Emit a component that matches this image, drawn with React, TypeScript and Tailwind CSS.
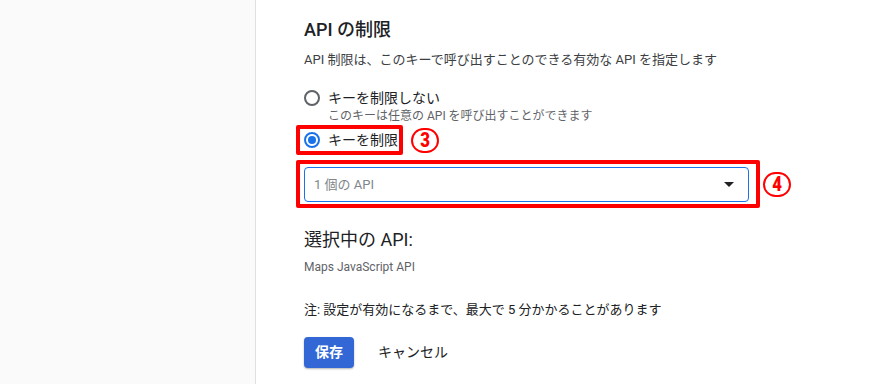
import React from "react";

const FONT = "font-['Roboto','Noto_Sans_CJK_JP',sans-serif]";

const Radio = ({ checked }: { checked?: boolean }) =>
  checked ? (
    <span className="w-4 h-4 rounded-full border-2 border-[#1a73e8] flex items-center justify-center shrink-0">
      <span className="w-2 h-2 rounded-full bg-[#1a73e8]" />
    </span>
  ) : (
    <span className="w-4 h-4 rounded-full border-2 border-[#5f6368] shrink-0" />
  );

const Marker = ({ n }: { n: string }) => (
  <span className="w-[28px] h-[25px] rounded-full border-2 border-[#ff0000] flex items-center justify-center text-[#ff0000] text-[21px] font-black leading-none shrink-0">
    <span className="inline-block scale-x-[0.8]">{n}</span>
  </span>
);

export default function App() {
  return (
    <div className={`flex w-[895px] h-[384px] bg-white overflow-hidden ${FONT}`}>
      {/* Side panel */}
      <aside className="w-[256px] h-full bg-[#fafafa] border-r border-[#e0e0e0] shrink-0" />

      {/* Form */}
      <main className="pl-[48px] pt-[18px] flex flex-col">
        <h2 className="text-[18px] leading-[24px] font-medium text-[#202124]">API の制限</h2>
        <p className="mt-[8px] text-[13px] leading-[20px] text-[#3c4043]">
          API 制限は、このキーで呼び出すことのできる有効な API を指定します
        </p>

        <label className="mt-[18px] flex items-center gap-2 h-[20px]">
          <Radio />
          <span className="text-[14px] text-[#202124]">キーを制限しない</span>
        </label>
        <p className="pl-[24px] text-[12px] leading-[16px] text-[#5f6368]">
          このキーは任意の API を呼び出すことができます
        </p>

        <div className="mt-[1px] flex items-center gap-[8px]">
          <div className="ml-[-8px] h-[30px] border-[4px] border-[#ff0000] rounded-[2px] flex items-center gap-2 pl-[4px] pr-[1px] shrink-0">
            <Radio checked />
            <span className="text-[14px] text-[#202124] whitespace-nowrap">キーを制限</span>
          </div>
          <Marker n="3" />
        </div>

        <div className="mt-[5px] flex items-center gap-[3px]">
          <div className="ml-[-8px] w-[464px] h-[48px] border-[4px] border-[#ff0000] rounded-[2px] pl-[4px] pt-[3px]">
            <div className="w-[445px] h-[35px] border border-[#1a73e8] rounded-[4px] flex items-center justify-between pl-[9px] pr-[14px]">
              <span className="text-[13px] text-[#80868b]">1 個の API</span>
              <svg width="10" height="5" viewBox="0 0 10 5">
                <path d="M0 0h10L5 5z" fill="#202124" />
              </svg>
            </div>
          </div>
          <Marker n="4" />
        </div>

        <h3 className="mt-[20px] text-[18px] leading-[24px] text-[#202124]">選択中の API:</h3>
        <p className="mt-[6px] text-[12px] leading-[18px] text-[#5f6368]">Maps JavaScript API</p>

        <p className="mt-[24px] text-[13px] leading-[20px] text-[#202124]">
          注: 設定が有効になるまで、最大で 5 分かかることがあります
        </p>

        <div className="mt-[17px] flex items-center gap-[24px]">
          <button className="w-[50px] h-[31px] rounded-[4px] bg-[#3367d6] text-white text-[14px] font-bold shadow-[0_1px_2px_rgba(0,0,0,0.3)]">
            保存
          </button>
          <button className="text-[14px] text-[#202124]">キャンセル</button>
        </div>
      </main>
    </div>
  );
}
